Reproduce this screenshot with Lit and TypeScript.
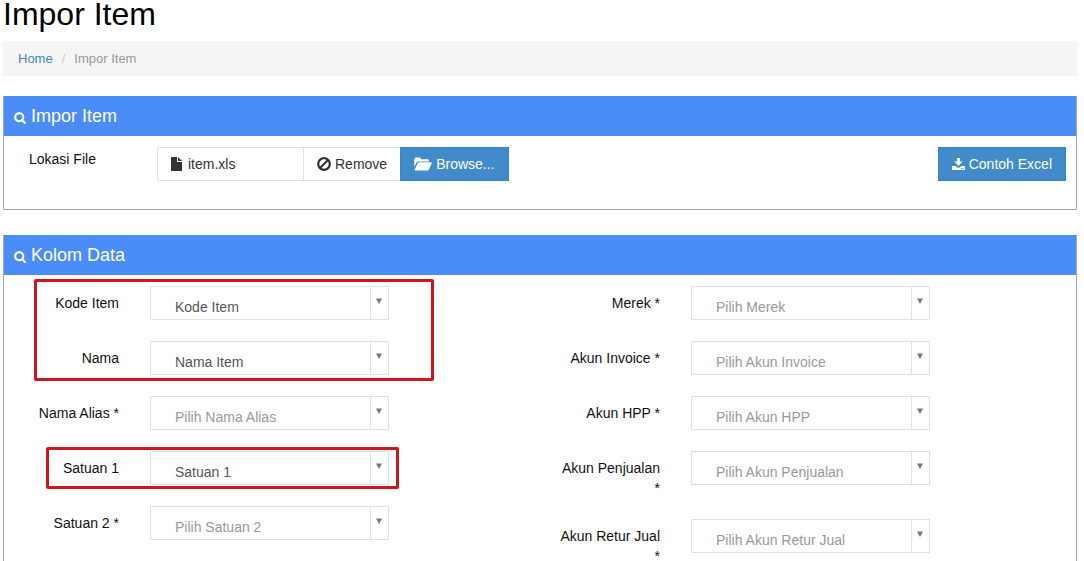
import { LitElement, html, css, svg } from "lit";
import { customElement, property } from "lit/decorators.js";

interface Field {
  id: string;
  label: string;
  text: string;
  chosen?: boolean;
}

const highlighted: Field[] = [
  { id: "kode", label: "Kode Item", text: "Kode Item", chosen: true },
  { id: "nama", label: "Nama", text: "Nama Item", chosen: true },
];
const alias: Field = { id: "alias", label: "Nama Alias *", text: "Pilih Nama Alias" };
const satuan1: Field = { id: "satuan1", label: "Satuan 1", text: "Satuan 1", chosen: true };
const satuan2: Field = { id: "satuan2", label: "Satuan 2 *", text: "Pilih Satuan 2" };

const rightFields: Field[] = [
  { id: "merek", label: "Merek *", text: "Pilih Merek" },
  { id: "invoice", label: "Akun Invoice *", text: "Pilih Akun Invoice" },
  { id: "hpp", label: "Akun HPP *", text: "Pilih Akun HPP" },
  { id: "penjualan", label: "Akun Penjualan *", text: "Pilih Akun Penjualan" },
  { id: "retur", label: "Akun Retur Jual *", text: "Pilih Akun Retur Jual" },
];

const icons = {
  search: {
    w: 12,
    h: 12,
    body: svg`<circle cx="5.2" cy="5.2" r="4.1" fill="none" stroke="currentColor" stroke-width="2.1"/>
      <path d="M8 8 L11 11" stroke="currentColor" stroke-width="2.4" stroke-linecap="round"/>`,
  },
  file: {
    w: 11,
    h: 14,
    body: svg`<path d="M0 0.6 Q0 0 0.6 0 H6 V5 H11 V13.4 Q11 14 10.4 14 H0.6 Q0 14 0 13.4 Z M7 0 L11 4 H7 Z" fill="currentColor"/>`,
  },
  ban: {
    w: 14,
    h: 14,
    body: svg`<circle cx="7" cy="7" r="5.8" fill="none" stroke="currentColor" stroke-width="2.2"/>
      <path d="M3.2 10.8 L10.8 3.2" stroke="currentColor" stroke-width="2.2"/>`,
  },
  folder: {
    w: 18,
    h: 14,
    body: svg`<path d="M0.2 9.8 V2.4 L1.4 0.6 H6 L7 2.2 H13.8 Q14.8 2.2 14.8 3.2 V4.4 H4.4 Q3.2 4.4 2.7 5.3 Z M4.9 5.2 H17.3 Q18.2 5.2 17.8 6.1 L15 12.6 Q14.6 13.4 13.7 13.4 H1.2 Q0.4 13.4 0.8 12.6 L3.8 5.9 Q4.1 5.2 4.9 5.2 Z" fill="currentColor"/>`,
  },
  download: {
    w: 13,
    h: 12,
    body: svg`<path d="M5 0 H8 V3.5 H10.8 L6.5 7.8 L2.2 3.5 H5 Z" fill="currentColor"/>
      <path d="M0 8 H3.6 L5.2 9.4 Q6.5 10.2 7.8 9.4 L9.4 8 H13 V12 H0 Z" fill="currentColor"/>
      <path d="M9.6 10.5 H11.8" stroke="#428bca" stroke-width="0.8"/>`,
  },
};

const icon = (name: keyof typeof icons) => {
  const i = icons[name];
  return html`<svg class="icon" width=${i.w} height=${i.h} viewBox="0 0 ${i.w} ${i.h}" aria-hidden="true">${i.body}</svg>`;
};

@customElement("select-field")
class SelectField extends LitElement {
  @property({ attribute: false }) field!: Field;

  static styles = css`
    :host {
      display: grid;
      grid-template-columns: 115px 45%;
      column-gap: 31px;
      align-items: start;
    }
    .label {
      padding: 7px 0 0 11px;
      line-height: 20px;
      text-align: right;
      color: #111;
    }
    .box {
      position: relative;
      display: flex;
    }
    .select {
      appearance: none;
      box-sizing: border-box;
      width: 100%;
      height: 34px;
      margin: 0;
      padding: 8px 30px 0 24px;
      border: 1px solid #e0e1e4;
      border-radius: 0;
      background: #fff;
      color: #999;
      font: inherit;
    }
    .chosen {
      color: #555;
    }
    .arrow {
      position: absolute;
      top: 1px;
      right: 1px;
      bottom: 1px;
      width: 17px;
      border-left: 1px solid #e0e1e4;
      pointer-events: none;
    }
    .arrow svg {
      display: block;
      margin: 11px auto 0;
      fill: #777;
    }
  `;

  render() {
    const f = this.field;
    return html`
      <label class="label" for=${f.id}>${f.label}</label>
      <div class="box">
        <select id=${f.id} class="select ${f.chosen ? "chosen" : ""}">
          <option>${f.text}</option>
        </select>
        <span class="arrow">
          <svg width="6" height="6" viewBox="0 0 6 6" aria-hidden="true"><path d="M0 0.5 H6 L3 6 Z" /></svg>
        </span>
      </div>
    `;
  }
}

@customElement("app-root")
class AppRoot extends LitElement {
  static styles = css`
    :host {
      display: block;
      height: 100vh;
      overflow: hidden;
      box-sizing: border-box;
      padding: 0 7px 0 3px;
      background: #fff;
      font: 14px/20px "Liberation Sans", Arial, sans-serif;
      color: #222;
    }
    .title {
      margin: 0 0 13px;
      font-size: 32px;
      line-height: 28px;
      font-weight: 400;
      color: #000;
    }
    .crumbs {
      display: flex;
      gap: 9px;
      padding: 8px 15px 7px;
      margin-bottom: 20px;
      background: #f5f5f5;
      font-size: 13px;
      color: #999;
    }
    .crumbs a {
      color: #4486ab;
      text-decoration: none;
    }
    .slash {
      color: #ccc;
    }
    .panel {
      border: 1px solid #9aabb5;
      border-top: 0;
      margin-bottom: 25px;
    }
    .head {
      display: flex;
      align-items: center;
      gap: 5px;
      height: 40px;
      padding: 0 10px;
      margin: 0;
      background: #4b8df8;
      color: #fff;
      font-size: 18px;
      font-weight: 400;
    }
    .head .icon {
      margin-top: 3px;
    }
    .file-row {
      display: flex;
      align-items: flex-start;
      padding: 11px 10px 28px 25px;
    }
    .file-label {
      width: 128px;
      line-height: 24px;
      color: #111;
    }
    .caption,
    .btn {
      display: flex;
      align-items: center;
      box-sizing: border-box;
      height: 34px;
      margin: 0;
      padding: 0 13px;
      gap: 4px;
      border: 1px solid #e0e1e4;
      border-radius: 0;
      background: #fff;
      color: #333;
      font: inherit;
      text-decoration: none;
      white-space: nowrap;
    }
    .caption {
      width: 146px;
      gap: 6px;
      border-right: 0;
    }
    .remove {
      border-right: 0;
    }
    .primary {
      border-color: #3d84c4;
      background: #428bca;
      color: #fff;
    }
    .example {
      margin-left: auto;
    }
    .fields {
      display: grid;
      grid-template-columns: 1fr 1fr;
      column-gap: 10px;
      padding: 11px 0 20px;
    }
    .column,
    .group {
      display: flex;
      flex-direction: column;
      gap: 21px;
    }
    .group {
      position: relative;
    }
    .mark {
      position: absolute;
      border: 3px solid #d0161b;
      border-radius: 2px;
      pointer-events: none;
    }
    .pair {
      inset: -7px auto -6px 30px;
      width: 394px;
    }
    .single {
      inset: -4px auto -4px 42px;
      width: 347px;
    }
  `;

  private row(f: Field) {
    return html`<select-field .field=${f}></select-field>`;
  }

  render() {
    return html`
      <h1 class="title">Impor Item</h1>
      <nav class="crumbs" aria-label="Breadcrumb">
        <a href="#">Home</a><span class="slash">/</span><span>Impor Item</span>
      </nav>

      <section class="panel">
        <h2 class="head">${icon("search")}Impor Item</h2>
        <div class="file-row">
          <span class="file-label">Lokasi File</span>
          <div class="caption">${icon("file")}item.xls</div>
          <button class="btn remove" type="button">${icon("ban")}Remove</button>
          <button class="btn primary" type="button">${icon("folder")}Browse...</button>
          <a class="btn primary example" href="#">${icon("download")}Contoh Excel</a>
        </div>
      </section>

      <section class="panel">
        <h2 class="head">${icon("search")}Kolom Data</h2>
        <div class="fields">
          <div class="column">
            <div class="group">
              ${highlighted.map((f) => this.row(f))}
              <div class="mark pair"></div>
            </div>
            ${this.row(alias)}
            <div class="group">
              ${this.row(satuan1)}
              <div class="mark single"></div>
            </div>
            ${this.row(satuan2)}
          </div>
          <div class="column">${rightFields.map((f) => this.row(f))}</div>
        </div>
      </section>
    `;
  }
}
